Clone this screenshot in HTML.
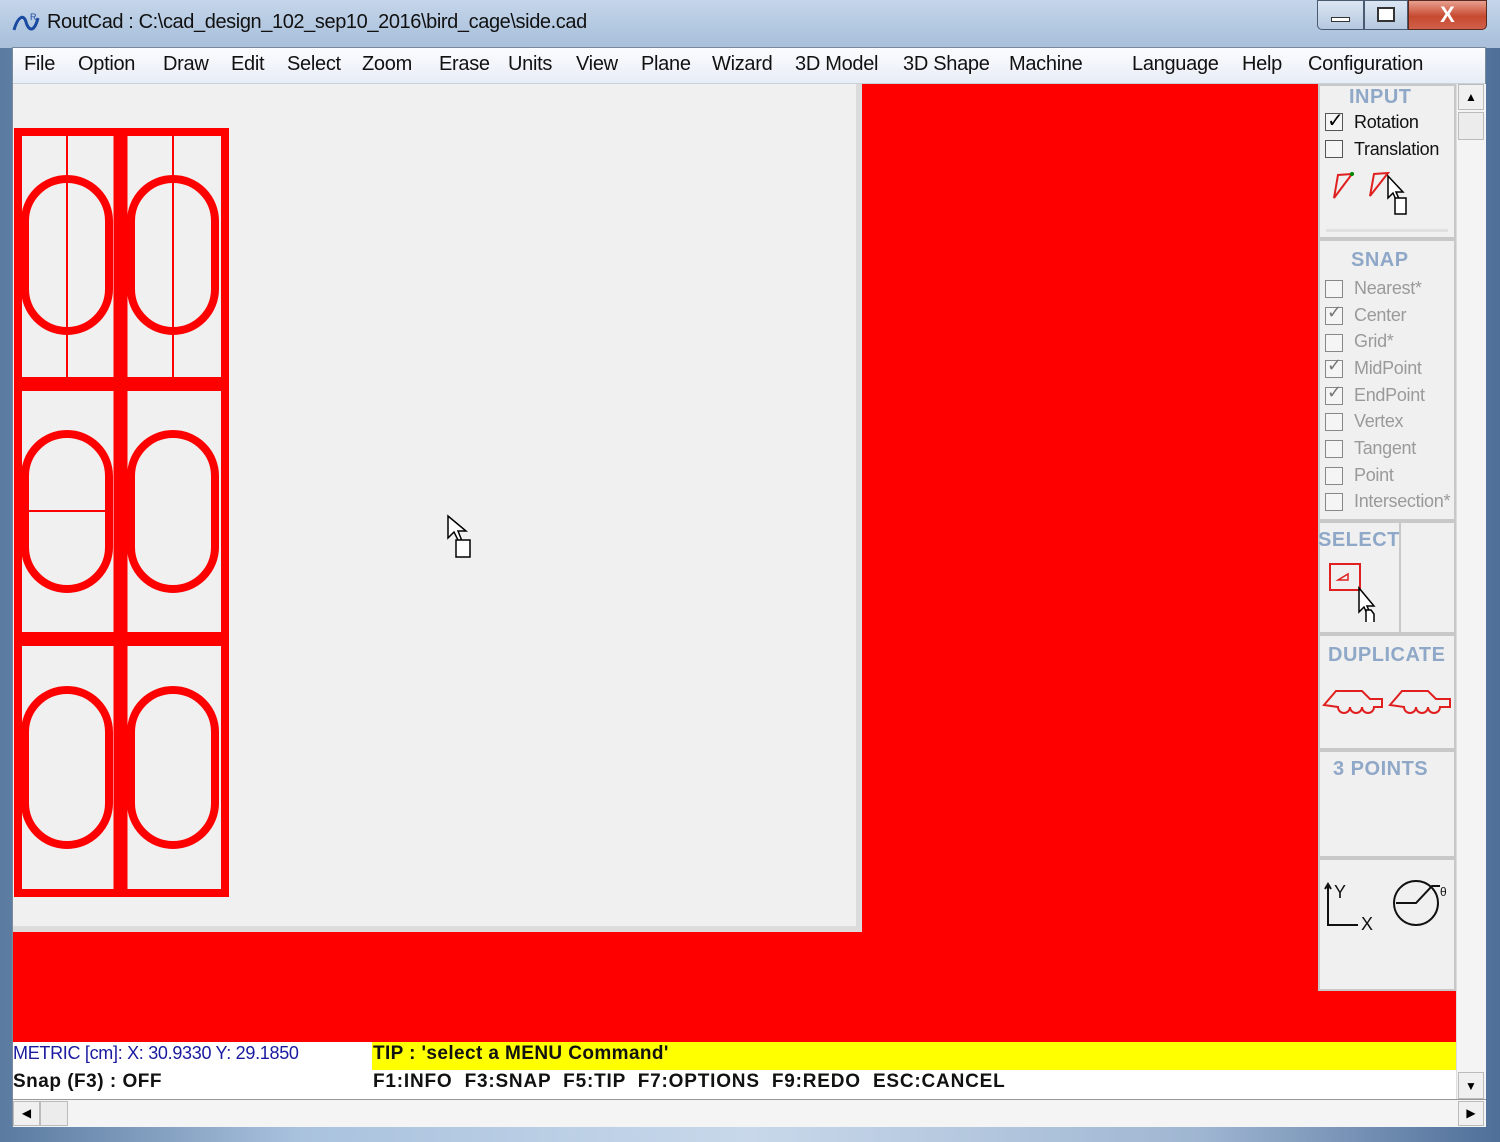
<!DOCTYPE html>
<html><head><meta charset="utf-8"><style>
*{margin:0;padding:0;box-sizing:border-box}
body{width:1500px;height:1142px;position:relative;overflow:hidden;background:#6b8bb0;font-family:"Liberation Sans","DejaVu Sans",sans-serif}
.a{position:absolute}
.menu span{position:absolute;top:53px;font-size:20px;color:#111;letter-spacing:-0.3px}
.cb{position:absolute;width:18px;height:18px;border:1px solid #888;background:#f5f5f5}
.lbl{position:absolute;font-size:18px;color:#111;letter-spacing:-0.3px}
.g{color:#9a9a9a}
.hd{position:absolute;font-weight:bold;font-size:20px;color:#8fa8c8;letter-spacing:0.5px}
.box{position:absolute;border:2px solid #c8c8c8;background:#f0f0f0}
</style></head><body>
<div class="a" style="left:0;top:0;width:1500px;height:1142px;background:linear-gradient(90deg,#5a7aa0,#a9c2de 20%,#c8d8ea 50%,#9fb6d2 80%,#4f6f99)"></div>
<div class="a" style="left:0;top:0;width:1500px;height:48px;background:linear-gradient(180deg,#c5d6ea,#b2c7e0 60%,#a9bfda)"></div>
<svg class="a" style="left:12px;top:10px" width="28" height="28" viewBox="0 0 28 28"><path d="M2 20 C6 6,12 4,14 12 S22 24,26 8" stroke="#1a4aa0" stroke-width="3" fill="none"/><text x="18" y="10" font-size="9" fill="#1a4aa0" font-family="Liberation Sans">R</text></svg>
<div class="a" style="left:47px;top:11px;font-size:20px;color:#111;letter-spacing:-0.4px">RoutCad : C:\cad_design_102_sep10_2016\bird_cage\side.cad</div>
<div class="a" style="left:1317px;top:0;width:47px;height:30px;border:1px solid #4a5a70;border-radius:0 0 0 5px;background:linear-gradient(#dbe6f3,#b5c8df)"></div>
<div class="a" style="left:1331px;top:17px;width:19px;height:5px;border:1px solid #333;background:#fff"></div>
<div class="a" style="left:1364px;top:0;width:44px;height:30px;border:1px solid #4a5a70;background:linear-gradient(#dbe6f3,#b5c8df)"></div>
<div class="a" style="left:1377px;top:7px;width:18px;height:15px;border:2px solid #333;background:#fff"></div>
<div class="a" style="left:1408px;top:0;width:79px;height:30px;border:1px solid #5a2a20;border-radius:0 0 5px 0;background:linear-gradient(#e8a090,#c74a30 55%,#d0604a);color:#fff;font-size:22px;font-weight:bold;text-align:center;line-height:28px">X</div>
<div class="a" style="left:12px;top:47px;width:1474px;height:1080px;background:#f0f0f0;border:1px solid #7a8a9a"></div>
<div class="a" style="left:13px;top:48px;width:1472px;height:36px;background:linear-gradient(#fbfcfe,#e8eef6);border-bottom:1px solid #c8d0dc"></div>
<div class="menu">
<span style="left:24px">File</span><span style="left:78px">Option</span><span style="left:163px">Draw</span><span style="left:231px">Edit</span><span style="left:287px">Select</span><span style="left:362px">Zoom</span><span style="left:439px">Erase</span><span style="left:508px">Units</span><span style="left:576px">View</span><span style="left:641px">Plane</span><span style="left:712px">Wizard</span><span style="left:795px">3D Model</span><span style="left:903px">3D Shape</span><span style="left:1009px">Machine</span><span style="left:1132px">Language</span><span style="left:1242px">Help</span><span style="left:1308px">Configuration</span>
</div>
<div class="a" style="left:13px;top:84px;width:1443px;height:958px;background:#ff0000"></div>
<div class="a" style="left:13px;top:84px;width:849px;height:848px;background:#f0f0f0;border-right:6px solid #dcdcdc;border-bottom:6px solid #dcdcdc"></div>
<svg class="a" style="left:0;top:0" width="240" height="900">
<g fill="none" stroke="#ff0000">
<rect x="18" y="132" width="207" height="761" stroke-width="8"/>
<line x1="120.5" y1="128" x2="120.5" y2="897" stroke-width="14"/>
<line x1="14" y1="384" x2="229" y2="384" stroke-width="14"/>
<line x1="14" y1="639" x2="229" y2="639" stroke-width="14"/>
<line x1="67" y1="132" x2="67" y2="377" stroke-width="2"/>
<line x1="173" y1="132" x2="173" y2="377" stroke-width="2"/>
<line x1="26" y1="511" x2="110" y2="511" stroke-width="2"/>
<g stroke-width="8">
<rect x="25" y="179" width="84" height="152" rx="42"/>
<rect x="131" y="179" width="84" height="152" rx="42"/>
<rect x="25" y="434" width="84" height="155" rx="42"/>
<rect x="131" y="434" width="84" height="155" rx="42"/>
<rect x="25" y="690" width="84" height="155" rx="42"/>
<rect x="131" y="690" width="84" height="155" rx="42"/>
</g></g></svg>
<svg class="a" style="left:446px;top:514px" width="30" height="48"><path d="M2 2 L2 24 L8 18 L13 28 L16 27 L12 17 L20 17 Z" fill="#fff" stroke="#000" stroke-width="1.5"/><rect x="10" y="26" width="14" height="17" fill="#fff" stroke="#000" stroke-width="1.5"/></svg>
<div class="box" style="left:1318px;top:84px;width:138px;height:155px"></div>
<div class="a" style="left:1326px;top:229px;width:122px;height:3px;background:#e0e0e0"></div>
<div class="hd" style="left:1349px;top:86px">INPUT</div>
<div class="cb" style="left:1325px;top:113px;border-color:#555"></div><div class="a" style="left:1327px;top:108px;font-size:20px;font-weight:bold">✓</div>
<div class="lbl" style="left:1354px;top:112px">Rotation</div>
<div class="cb" style="left:1325px;top:140px;border-color:#555"></div>
<div class="lbl" style="left:1354px;top:139px">Translation</div>
<svg class="a" style="left:1330px;top:170px" width="90" height="50"><path d="M4 28 L8 5 L22 4 Z" fill="none" stroke="#e02020" stroke-width="2"/><circle cx="22" cy="4" r="2" fill="#080"/><path d="M40 26 L44 4 L58 3 Z" fill="none" stroke="#e02020" stroke-width="2"/><path d="M58 6 L58 28 L63 23 L67 32 L70 31 L66 22 L73 22 Z" fill="#fff" stroke="#000" stroke-width="1.5"/><rect x="65" y="28" width="11" height="16" fill="#fff" stroke="#000" stroke-width="1.5"/></svg>
<div class="box" style="left:1318px;top:239px;width:138px;height:282px"></div>
<div class="hd" style="left:1351px;top:249px">SNAP</div>
<div class="cb" style="left:1325px;top:280px"></div><div class="lbl g" style="left:1354px;top:278px">Nearest*</div>
<div class="cb" style="left:1325px;top:307px"></div><div class="a" style="left:1327px;top:302px;font-size:18px;color:#777">✓</div><div class="lbl g" style="left:1354px;top:305px">Center</div>
<div class="cb" style="left:1325px;top:334px"></div><div class="lbl g" style="left:1354px;top:331px">Grid*</div>
<div class="cb" style="left:1325px;top:360px"></div><div class="a" style="left:1327px;top:355px;font-size:18px;color:#777">✓</div><div class="lbl g" style="left:1354px;top:358px">MidPoint</div>
<div class="cb" style="left:1325px;top:387px"></div><div class="a" style="left:1327px;top:382px;font-size:18px;color:#777">✓</div><div class="lbl g" style="left:1354px;top:385px">EndPoint</div>
<div class="cb" style="left:1325px;top:413px"></div><div class="lbl g" style="left:1354px;top:411px">Vertex</div>
<div class="cb" style="left:1325px;top:440px"></div><div class="lbl g" style="left:1354px;top:438px">Tangent</div>
<div class="cb" style="left:1325px;top:467px"></div><div class="lbl g" style="left:1354px;top:465px">Point</div>
<div class="cb" style="left:1325px;top:493px"></div><div class="lbl g" style="left:1354px;top:491px">Intersection*</div>
<div class="box" style="left:1318px;top:521px;width:83px;height:113px"></div>
<div class="box" style="left:1399px;top:521px;width:57px;height:113px"></div>
<div class="hd" style="left:1318px;top:529px">SELECT</div>
<svg class="a" style="left:1328px;top:562px" width="60" height="66"><rect x="2" y="2" width="30" height="26" fill="none" stroke="#e02020" stroke-width="2"/><path d="M10 18 L20 12 L20 18 Z" fill="none" stroke="#e02020" stroke-width="1.5"/><path d="M31 26 L31 50 L36 45 L40 54 L43 53 L39 44 L46 44 Z" fill="#fff" stroke="#000" stroke-width="1.5"/><path d="M38 60 L38 48 L43 48 L46 52 L46 60" fill="#fff" stroke="#000" stroke-width="1.5"/></svg>
<div class="box" style="left:1318px;top:634px;width:138px;height:116px"></div>
<div class="hd" style="left:1328px;top:644px">DUPLICATE</div>
<svg class="a" style="left:1322px;top:685px" width="132" height="34"><g fill="none" stroke="#e02020" stroke-width="2"><path d="M2 20 L14 6 L40 6 L48 14 L60 14 L60 22 L52 22 A6 6 0 0 1 40 22 A6 6 0 0 1 28 22 A6 6 0 0 1 16 22 Z"/><path d="M68 20 L80 6 L106 6 L114 14 L128 14 L128 22 L118 22 A6 6 0 0 1 106 22 A6 6 0 0 1 94 22 A6 6 0 0 1 82 22 Z"/></g></svg>
<div class="box" style="left:1318px;top:750px;width:138px;height:108px"></div>
<div class="hd" style="left:1333px;top:758px">3 POINTS</div>
<div class="box" style="left:1318px;top:858px;width:138px;height:133px"></div>
<svg class="a" style="left:1320px;top:876px" width="134" height="60"><g stroke="#111" stroke-width="2" fill="none"><path d="M8 10 L8 49 L38 49"/><path d="M5 13 L8 8 L11 13"/><circle cx="96" cy="27" r="22"/><path d="M76 27 L96 27 L112 10 L120 10"/></g><text x="14" y="22" font-size="18" font-family="Liberation Sans" fill="#111">Y</text><text x="41" y="54" font-size="18" font-family="Liberation Sans" fill="#111">X</text><text x="120" y="20" font-size="12" font-family="Liberation Sans" fill="#111">θ</text></svg>
<div class="a" style="left:1456px;top:84px;width:30px;height:1016px;background:#f4f4f4;border-left:1px solid #ddd"></div>
<div class="a" style="left:1458px;top:84px;width:26px;height:26px;border:1px solid #bbb;background:#f0f0f0;font-size:12px;text-align:center;line-height:24px">▲</div>
<div class="a" style="left:1458px;top:112px;width:26px;height:28px;border:1px solid #bbb;background:#ececec"></div>
<div class="a" style="left:1458px;top:1072px;width:26px;height:27px;border:1px solid #bbb;background:#f0f0f0;font-size:12px;text-align:center;line-height:26px">▼</div>
<div class="a" style="left:13px;top:1042px;width:1443px;height:57px;background:#fff"></div>
<div class="a" style="left:372px;top:1042px;width:1084px;height:28px;background:#ffff00"></div>
<div class="a" style="left:13px;top:1043px;font-size:18px;color:#1a1aa0;letter-spacing:-0.3px">METRIC [cm]: X: 30.9330  Y: 29.1850</div>
<div class="a" style="left:373px;top:1043px;font-size:19px;color:#111;font-weight:bold;letter-spacing:0.4px">TIP : 'select a MENU Command'</div>
<div class="a" style="left:13px;top:1071px;font-size:19px;color:#111;font-weight:bold;letter-spacing:0.5px">Snap (F3) : OFF</div>
<div class="a" style="left:373px;top:1071px;font-size:19px;color:#111;font-weight:bold;letter-spacing:0.8px;word-spacing:6px">F1:INFO F3:SNAP F5:TIP F7:OPTIONS F9:REDO ESC:CANCEL</div>
<div class="a" style="left:13px;top:1099px;width:1473px;height:28px;background:#f4f4f4;border-top:1px solid #999"></div>
<div class="a" style="left:13px;top:1101px;width:27px;height:25px;border:1px solid #bbb;background:#f0f0f0;font-size:12px;text-align:center;line-height:23px">◀</div>
<div class="a" style="left:40px;top:1101px;width:28px;height:25px;border:1px solid #bbb;background:#ececec"></div>
<div class="a" style="left:1458px;top:1101px;width:26px;height:25px;border:1px solid #bbb;background:#f0f0f0;font-size:12px;text-align:center;line-height:23px">▶</div>
</body></html>
